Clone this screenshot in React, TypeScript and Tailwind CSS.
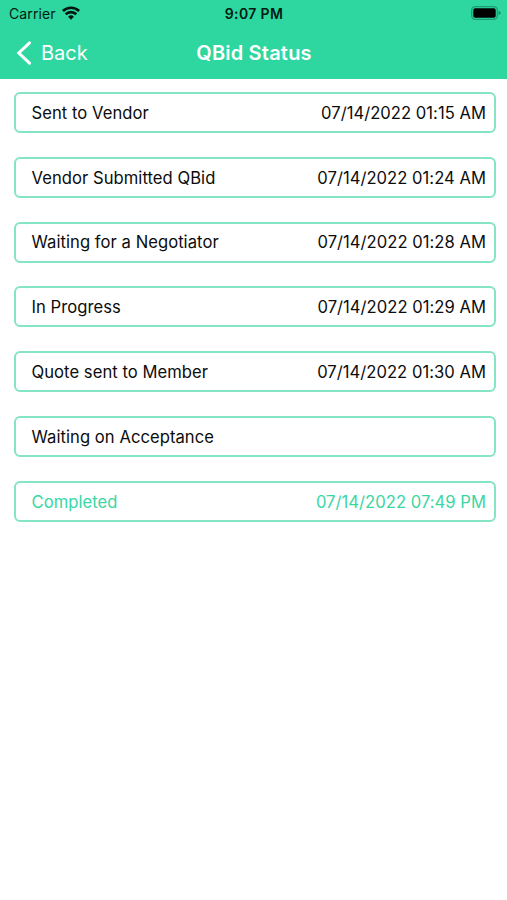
const rows = [
  { label: 'Sent to Vendor', date: '07/14/2022 01:15 AM' },
  { label: 'Vendor Submitted QBid', date: '07/14/2022 01:24 AM' },
  { label: 'Waiting for a Negotiator', date: '07/14/2022 01:28 AM' },
  { label: 'In Progress', date: '07/14/2022 01:29 AM' },
  { label: 'Quote sent to Member', date: '07/14/2022 01:30 AM' },
  { label: 'Waiting on Acceptance', date: '' },
  { label: 'Completed', date: '07/14/2022 07:49 PM', done: true },
];

export default function App() {
  return (
    <div className="h-[900px] w-[507px] bg-white font-['Inter',sans-serif] text-[#0c0c0c]">
      <header className="h-[79px] bg-[#2dd79f]">
        <div className="grid h-[27px] grid-cols-3 items-center pl-[9px] pr-[6px] text-[14px] text-[#031a12]">
          <div className="flex items-center gap-[6px]">
            <span className="tracking-[0.1px]">Carrier</span>
            <svg width="18" height="14" viewBox="0 0 18 14" className="-mt-[2px]" fill="none" stroke="#03150f" strokeWidth="2.6">
              <path d="M.9 5a11.6 11.6 0 0 1 16.2 0M3.7 8.3a7.6 7.6 0 0 1 10.6 0" />
              <path d="M6.1 10.7a4.2 4.2 0 0 1 5.8 0L9 13.8z" fill="#03150f" stroke="none" />
            </svg>
          </div>
          <span className="-ml-[2px] text-center font-semibold tracking-[0.35px]">9:07 PM</span>
          <svg className="-mt-[1px] justify-self-end" width="30" height="14" viewBox="0 0 30 14">
            <rect x=".7" y=".7" width="25.6" height="12.6" rx="3.5" fill="none" stroke="#1c9c73" strokeWidth="1.3" />
            <rect x="2.3" y="2.2" width="22.4" height="9.6" rx="1.8" />
            <path d="M27.6 4.8v4.4q4.4-2.2 0-4.4" fill="#1c8c68" />
          </svg>
        </div>
        <div className="grid h-[51px] grid-cols-3 items-center text-[20px] text-white">
          <div className="flex items-center gap-[9px] pl-[16px]">
            <svg width="16" height="24" viewBox="0 0 16 24" fill="none" stroke="white" strokeWidth="3" strokeLinecap="round">
              <path d="M13.5 1.8 2.8 12l10.7 10.2" />
            </svg>
            <span>Back</span>
          </div>
          <h1 className="pl-[1px] text-center font-semibold tracking-[0.2px]">QBid Status</h1>
        </div>
      </header>
      <main className="flex flex-col gap-[23.8px] pl-[14px] pr-[11px] pt-[13px]">
        {rows.map((r) => (
          <div key={r.label} className={`flex h-[41px] items-center justify-between rounded-[6px] border-2 border-[#84e4c4] pl-[15.5px] pr-[8px] pt-[1.6px] text-[16.6px] ${r.done ? 'text-[#3ad6a4]' : ''}`}>
            <span className="tracking-[0.05px]">{r.label}</span>
            <span className="tracking-[0.03px]">{r.date}</span>
          </div>
        ))}
      </main>
    </div>
  );
}
